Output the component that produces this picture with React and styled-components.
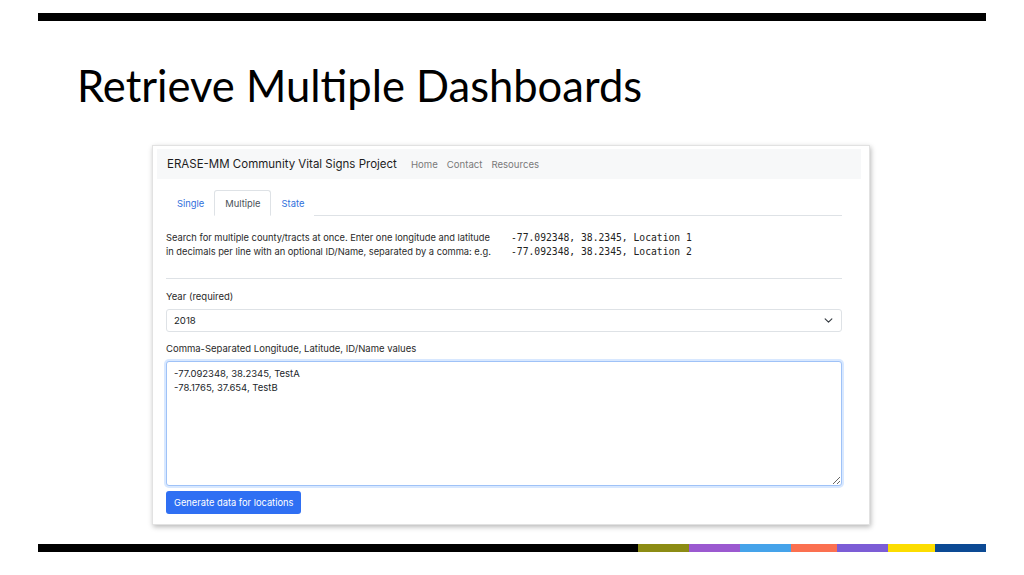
import React, { useEffect, useRef } from 'react';
import styled, { createGlobalStyle } from 'styled-components';

const GlobalStyle = createGlobalStyle`
  html, body {
    margin: 0;
    padding: 0;
    background: #fff;
  }
`;

const Slide = styled.div`
  width: 1024px;
  height: 575px;
  display: flex;
  flex-direction: column;
  overflow: hidden;
  background: #fff;
`;

const TopRule = styled.div`
  height: 8px;
  margin: 13px 38px 0;
  background: #000;
`;

const Title = styled.h1`
  margin: 38px 0 0 77px;
  font-family: Lato, "Open Sans", sans-serif;
  font-weight: 400;
  font-size: 43.5px;
  line-height: 52px;
  color: #000;
`;

const Card = styled.div`
  margin: 34px 0 0 152px;
  width: 718px;
  height: 380px;
  box-sizing: border-box;
  padding: 3px 8px 0 4px;
  background: #fff;
  border: 1px solid #e2e2e2;
  box-shadow: 1px 2px 5px rgba(0, 0, 0, 0.28);
  font-family: Inter, "Liberation Sans", sans-serif;
  color: #212529;
`;

const Navbar = styled.nav`
  height: 30px;
  display: flex;
  align-items: center;
  padding-left: 10px;
  background: #f7f8f9;
`;

const Brand = styled.span`
  font-size: 11.5px;
  color: #1d1d1d;
  margin-right: 14px;
`;

const NavLink = styled.span`
  font-size: 9.6px;
  color: #7a7a7a;
  margin-right: 9px;
`;

const Body = styled.div`
  padding: 11px 19px 0 9px;
`;

const Tabs = styled.div`
  display: flex;
  height: 25px;
  border-bottom: 1px solid #dee2e6;
`;

const Tab = styled.div`
  display: flex;
  align-items: center;
  padding: 0 9px 0 10px;
  margin-bottom: -1px;
  font-size: 9.4px;
  color: ${p => (p.$active ? '#495057' : '#2f6fdc')};
  background: #fff;
  border: 1px solid ${p => (p.$active ? '#dee2e6' : 'transparent')};
  border-bottom-color: ${p => (p.$active ? '#fff' : 'transparent')};
  border-radius: 3px 3px 0 0;
`;

const Intro = styled.div`
  display: flex;
  margin-top: 15px;
  padding-bottom: 19px;
  border-bottom: 1px solid #dee2e6;
`;

const IntroText = styled.p`
  margin: 0;
  width: 345px;
  font-size: 9.3px;
  line-height: 14px;
  color: #2a2a2a;
  white-space: nowrap;
`;

const Example = styled.pre`
  margin: 0;
  font-family: "DejaVu Sans Mono", "Liberation Mono", monospace;
  font-size: 9.7px;
  line-height: 14px;
  color: #222;
`;

const Label = styled.div`
  margin-top: ${p => p.$top || 11}px;
  font-size: 9.5px;
  line-height: 14px;
  color: #2a2a2a;
`;

const Select = styled.div`
  margin-top: 5px;
  height: 23px;
  box-sizing: border-box;
  display: flex;
  align-items: center;
  justify-content: space-between;
  padding: 0 8px 0 7px;
  border: 1px solid #dee2e6;
  border-radius: 3px;
  font-size: 9.6px;
  color: #212529;
`;

const TextArea = styled.textarea`
  display: block;
  margin-top: 5px;
  width: 100%;
  height: 125px;
  box-sizing: border-box;
  padding: 5px 7px;
  border: 1px solid #9fc2f7;
  border-radius: 3px;
  box-shadow: 0 0 0 2px rgba(13, 110, 253, 0.16);
  font-family: Inter, "Liberation Sans", sans-serif;
  font-size: 9.5px;
  line-height: 14px;
  color: #212529;
  caret-color: #212529;
  outline: none;
  resize: vertical;
`;

const Button = styled.button`
  margin-top: 5px;
  height: 23px;
  padding: 0 8px;
  border: none;
  border-radius: 3px;
  background: #2f6ff3;
  color: #fff;
  font-family: Inter, "Liberation Sans", sans-serif;
  font-size: 9.3px;
`;

const BottomRule = styled.div`
  display: flex;
  height: 8px;
  margin: 19px 38px 0;
`;

const Segment = styled.div`
  width: ${p => p.$w}px;
  background: ${p => p.$c};
`;

const segments = [
  [600, '#000'],
  [51, '#8c8c14'],
  [51, '#9b59d0'],
  [51, '#45a3ea'],
  [46, '#fb7050'],
  [51, '#7c5dd6'],
  [47, '#fcdd00'],
  [51, '#0c4a94'],
];

function Chevron() {
  return (
    <svg width="9" height="9" viewBox="0 0 16 16" fill="none" stroke="#343a40" strokeWidth="2" strokeLinecap="round" strokeLinejoin="round">
      <path d="M2 5l6 6 6-6" />
    </svg>
  );
}

export default function App() {
  const ref = useRef(null);

  useEffect(() => {
    const el = ref.current;
    if (el) {
      el.focus();
      el.setSelectionRange(el.value.length, el.value.length);
    }
  }, []);

  return (
    <Slide>
      <GlobalStyle />
      <TopRule />
      <Title>Retrieve Multiple Dashboards</Title>
      <Card>
        <Navbar>
          <Brand>ERASE-MM Community Vital Signs Project</Brand>
          <NavLink>Home</NavLink>
          <NavLink>Contact</NavLink>
          <NavLink>Resources</NavLink>
        </Navbar>
        <Body>
          <Tabs>
            <Tab>Single</Tab>
            <Tab $active>Multiple</Tab>
            <Tab>State</Tab>
          </Tabs>
          <Intro>
            <IntroText>
              Search for multiple county/tracts at once. Enter one longitude and latitude
              <br />
              in decimals per line with an optional ID/Name, separated by a comma: e.g.
            </IntroText>
            <Example>{'-77.092348, 38.2345, Location 1\n-77.092348, 38.2345, Location 2'}</Example>
          </Intro>
          <Label $top={11}>Year (required)</Label>
          <Select>
            <span>2018</span>
            <Chevron />
          </Select>
          <Label $top={10}>Comma-Separated Longitude, Latitude, ID/Name values</Label>
          <TextArea
            ref={ref}
            defaultValue={'-77.092348, 38.2345, TestA\n-78.1765, 37.654, TestB'}
          />
          <Button>Generate data for locations</Button>
        </Body>
      </Card>
      <BottomRule>
        {segments.map(([w, c], i) => (
          <Segment key={i} $w={w} $c={c} />
        ))}
      </BottomRule>
    </Slide>
  );
}
